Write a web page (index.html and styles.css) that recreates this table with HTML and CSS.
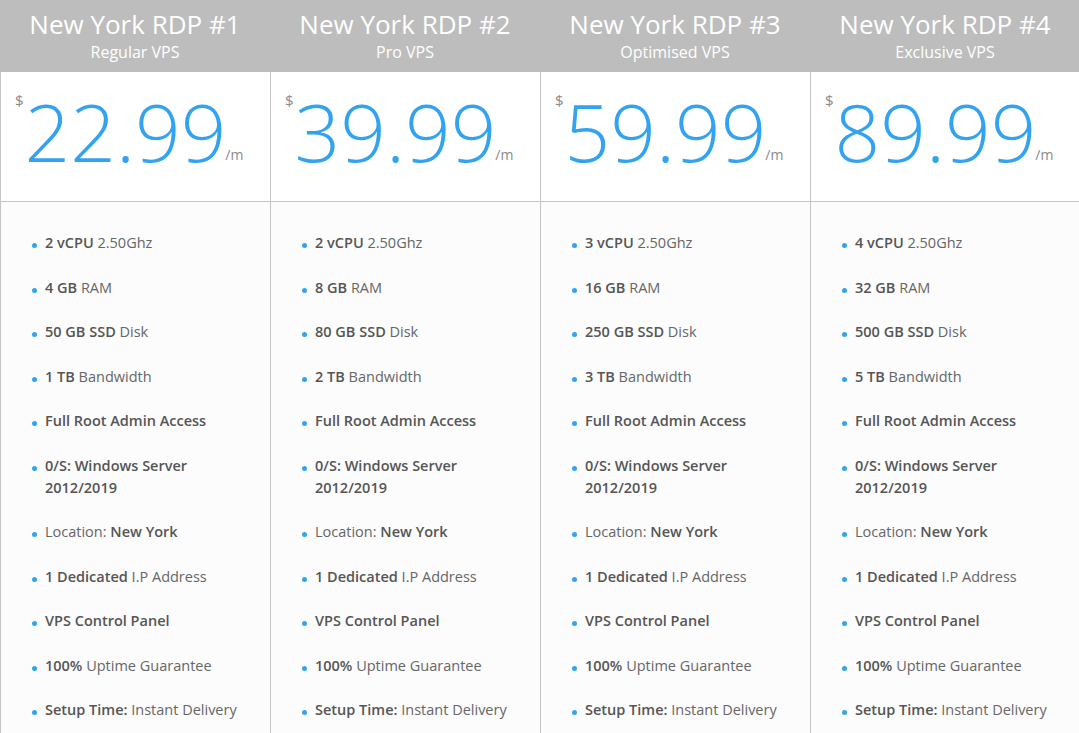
FILE: index.html
```html
<!DOCTYPE html>
<html>
<head>
<meta charset="utf-8">
<link rel="stylesheet" href="styles.css">
</head>
<body>
<div class="plans">
  <div class="plan">
    <div class="plan-head"><div class="plan-name">New York RDP #1</div><div class="plan-type">Regular VPS</div></div>
    <div class="plan-price"><span class="cur">$</span><span class="amount">22.99</span><span class="per">/m</span></div>
    <ul class="features">
      <li><span><b>2 vCPU</b> 2.50Ghz</span></li>
      <li><span><b>4 GB</b> RAM</span></li>
      <li><span><b>50 GB SSD</b> Disk</span></li>
      <li><span><b>1 TB</b> Bandwidth</span></li>
      <li><span><b>Full Root Admin Access</b></span></li>
      <li><span><b>0/S: Windows Server 2012/2019</b></span></li>
      <li><span>Location: <b>New York</b></span></li>
      <li><span><b>1 Dedicated</b> I.P Address</span></li>
      <li><span><b>VPS Control Panel</b></span></li>
      <li><span><b>100%</b> Uptime Guarantee</span></li>
      <li><span><b>Setup Time:</b> Instant Delivery</span></li>
    </ul>
  </div>
  <div class="plan">
    <div class="plan-head"><div class="plan-name">New York RDP #2</div><div class="plan-type">Pro VPS</div></div>
    <div class="plan-price"><span class="cur">$</span><span class="amount">39.99</span><span class="per">/m</span></div>
    <ul class="features">
      <li><span><b>2 vCPU</b> 2.50Ghz</span></li>
      <li><span><b>8 GB</b> RAM</span></li>
      <li><span><b>80 GB SSD</b> Disk</span></li>
      <li><span><b>2 TB</b> Bandwidth</span></li>
      <li><span><b>Full Root Admin Access</b></span></li>
      <li><span><b>0/S: Windows Server 2012/2019</b></span></li>
      <li><span>Location: <b>New York</b></span></li>
      <li><span><b>1 Dedicated</b> I.P Address</span></li>
      <li><span><b>VPS Control Panel</b></span></li>
      <li><span><b>100%</b> Uptime Guarantee</span></li>
      <li><span><b>Setup Time:</b> Instant Delivery</span></li>
    </ul>
  </div>
  <div class="plan">
    <div class="plan-head"><div class="plan-name">New York RDP #3</div><div class="plan-type">Optimised VPS</div></div>
    <div class="plan-price"><span class="cur">$</span><span class="amount">59.99</span><span class="per">/m</span></div>
    <ul class="features">
      <li><span><b>3 vCPU</b> 2.50Ghz</span></li>
      <li><span><b>16 GB</b> RAM</span></li>
      <li><span><b>250 GB SSD</b> Disk</span></li>
      <li><span><b>3 TB</b> Bandwidth</span></li>
      <li><span><b>Full Root Admin Access</b></span></li>
      <li><span><b>0/S: Windows Server 2012/2019</b></span></li>
      <li><span>Location: <b>New York</b></span></li>
      <li><span><b>1 Dedicated</b> I.P Address</span></li>
      <li><span><b>VPS Control Panel</b></span></li>
      <li><span><b>100%</b> Uptime Guarantee</span></li>
      <li><span><b>Setup Time:</b> Instant Delivery</span></li>
    </ul>
  </div>
  <div class="plan">
    <div class="plan-head"><div class="plan-name">New York RDP #4</div><div class="plan-type">Exclusive VPS</div></div>
    <div class="plan-price"><span class="cur">$</span><span class="amount">89.99</span><span class="per">/m</span></div>
    <ul class="features">
      <li><span><b>4 vCPU</b> 2.50Ghz</span></li>
      <li><span><b>32 GB</b> RAM</span></li>
      <li><span><b>500 GB SSD</b> Disk</span></li>
      <li><span><b>5 TB</b> Bandwidth</span></li>
      <li><span><b>Full Root Admin Access</b></span></li>
      <li><span><b>0/S: Windows Server 2012/2019</b></span></li>
      <li><span>Location: <b>New York</b></span></li>
      <li><span><b>1 Dedicated</b> I.P Address</span></li>
      <li><span><b>VPS Control Panel</b></span></li>
      <li><span><b>100%</b> Uptime Guarantee</span></li>
      <li><span><b>Setup Time:</b> Instant Delivery</span></li>
    </ul>
  </div>
</div>
</body>
</html>
```

FILE: styles.css
```css
* { box-sizing: border-box; }
html, body { margin: 0; padding: 0; }
body {
  font-family: "Open Sans", "Liberation Sans", sans-serif;
  background: #fcfcfc;
  overflow: hidden;
}
.plans {
  display: grid;
  grid-template-columns: repeat(4, 270px);
  width: 1080px;
}
.plan {
  border-left: 1px solid #c4c4c4;
  background: #fcfcfc;
  min-height: 733px;
}
.plan-head {
  background: #bdbdbd;
  color: #fff;
  text-align: center;
  height: 72px;
  margin-left: -1px;
  padding-top: 7px;
}
.plan-name {
  font-size: 26px;
  line-height: 34px;
  font-weight: 400;
}
.plan-type {
  font-size: 16px;
  line-height: 22px;
}
.plan-price {
  background: #fff;
  height: 130px;
  border-bottom: 1px solid #c4c4c4;
  display: flex;
  align-items: flex-start;
  padding-left: 14px;
}
.cur {
  color: #8a8a8a;
  font-size: 15px;
  line-height: 20px;
  margin-top: 18px;
}
.amount {
  color: #33a3f0;
  font-size: 80px;
  font-weight: 300;
  line-height: 80px;
  margin-top: 19px;
  margin-left: 1px;
}
.per {
  color: #8a8a8a;
  font-size: 14px;
  line-height: 20px;
  margin-top: 73px;
  margin-left: -1px;
}
.features {
  list-style: none;
  margin: 0;
  padding: 30px 20px 0 31px;
}
.features li {
  display: flex;
  align-items: flex-start;
  gap: 8px;
  font-size: 14.5px;
  line-height: 22px;
  color: #666;
  margin-bottom: 22.5px;
}
.features li::before {
  content: "";
  flex: none;
  width: 5px;
  height: 5px;
  border-radius: 50%;
  background: #33a3f0;
  margin-top: 11px;
}
.features b {
  font-weight: 600;
  color: #555;
}
```
